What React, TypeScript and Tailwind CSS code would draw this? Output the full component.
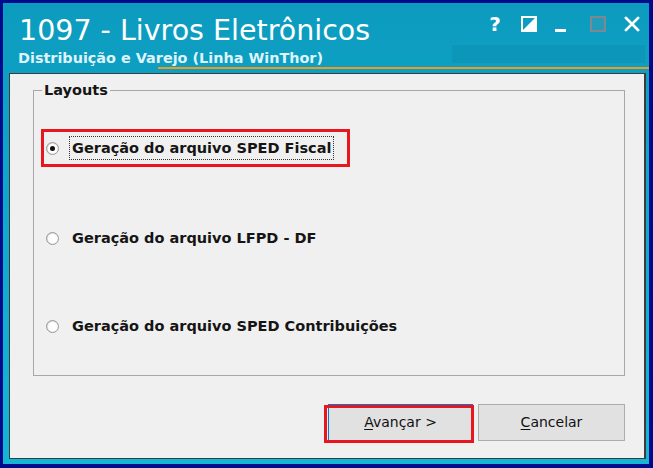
import React from "react";

function Radio({ checked }: { checked?: boolean }) {
  return (
    <div className="w-[13px] h-[13px] rounded-full border border-[#9a9a9a] bg-gradient-to-br from-[#d4d4d4] to-white flex items-center justify-center">
      <div className="w-[9px] h-[9px] rounded-full bg-white flex items-center justify-center">
        {checked && <div className="w-[5px] h-[5px] rounded-full bg-[#111]" />}
      </div>
    </div>
  );
}

function Option({ label, checked, focused, className }: { label: string; checked?: boolean; focused?: boolean; className?: string }) {
  return (
    <div className={"flex items-center h-[24px] " + (className ?? "")}>
      <div className="ml-[12px]">
        <Radio checked={checked} />
      </div>
      <div
        className={
          "ml-[10px] h-[24px] flex items-center px-[2px] border border-dotted " +
          (focused ? "border-[#333]" : "border-transparent")
        }
      >
        <span className="text-[14.5px] font-bold text-[#151515] leading-none">{label}</span>
      </div>
    </div>
  );
}

export default function App() {
  return (
    <div
      className="w-[653px] h-[468px] bg-[#000a8c] pt-[3px] pl-[3px] pr-[4px] pb-[4px]"
      style={{ fontFamily: '"DejaVu Sans", Verdana, sans-serif' }}
    >
      <div className="relative w-full h-full flex flex-col bg-gradient-to-b from-[#0c9bbf] via-[#10aacb] to-[#14b6d4]">
        {/* header */}
        <div className="relative h-[70px] flex flex-col">
          <div className="flex items-start justify-between">
            <div className="ml-[16px] mt-[11px] text-white text-[28.5px] leading-[34px]">1097 - Livros Eletrônicos</div>
            <div className="flex items-center mt-[12px] mr-[9px] gap-0">
              <span className="text-white font-bold text-[20px] leading-[18px] w-[14px] text-center">?</span>
              <svg width="16" height="16" viewBox="0 0 16 16" className="ml-[19px]">
                <rect x="1" y="1" width="14" height="14" fill="none" stroke="#fff" strokeWidth="2" />
                <polygon points="1,15 15,1 15,15" fill="#fff" />
              </svg>
              <div className="ml-[18px] mt-[13px] w-[11px] h-[3px] bg-white" />
              <div className="ml-[24px] w-[16px] h-[16px] border-2 border-[#7a8a90] bg-[#5f97a8]/30" />
              <svg width="16" height="16" viewBox="0 0 16 16" className="ml-[18px]">
                <path d="M2 2 L14 14 M14 2 L2 14" stroke="#fff" strokeWidth="2.6" strokeLinecap="square" />
              </svg>
            </div>
          </div>
          <div className="ml-[15px] mt-[1px] text-[14.4px] font-bold text-[#dff3fa] leading-[18px]">
            Distribuição e Varejo (Linha WinThor)
          </div>
          {/* decorative overlays */}
          <div className="absolute left-[449px] top-[42px] w-[193px] h-[18px] bg-[#0a7f9f]/25" />
          <div className="absolute left-[155px] right-0 top-[64px] h-[2px] bg-[#f39a1c]" />
        </div>

        {/* panel */}
        <div className="ml-[6px] mr-[3px] mb-[5px] flex-1 bg-[#f0f0f0] border border-[#3c3c3c] border-r-2 flex flex-col pl-[23px] pr-[20px] pt-[8px]">
          <fieldset className="w-[592px] h-[294px] border border-[#a8a8a8] m-0 p-0">
            <legend className="ml-[8px] px-[2px] text-[14.5px] font-bold text-[#151515] leading-[16px]">Layouts</legend>
            <div className="flex flex-col">
              <Option label="Geração do arquivo SPED Fiscal" checked focused className="mt-[38px]" />
              <Option label="Geração do arquivo LFPD - DF" className="mt-[66px]" />
              <Option label="Geração do arquivo SPED Contribuições" className="mt-[64px]" />
            </div>
          </fieldset>
          <div className="mt-[28px] flex justify-end gap-[5px] w-[592px]">
            <button className="w-[145px] h-[37px] bg-[#e1e1e1] border border-[#0078d7] text-[14px] text-[#111]">
              <span className="underline underline-offset-2">A</span>vançar &gt;
            </button>
            <button className="w-[147px] h-[37px] bg-[#e1e1e1] border border-[#adadad] text-[14px] text-[#111]">
              <span className="underline underline-offset-2">C</span>ancelar
            </button>
          </div>
        </div>

        {/* red highlight annotations */}
        <div className="absolute left-[38px] top-[126px] w-[309px] h-[38px] border-[3px] border-[#e8161f] pointer-events-none" />
        <div className="absolute left-[321px] top-[402px] w-[150px] h-[38px] border-[3px] border-[#e8161f] pointer-events-none" />
      </div>
    </div>
  );
}
